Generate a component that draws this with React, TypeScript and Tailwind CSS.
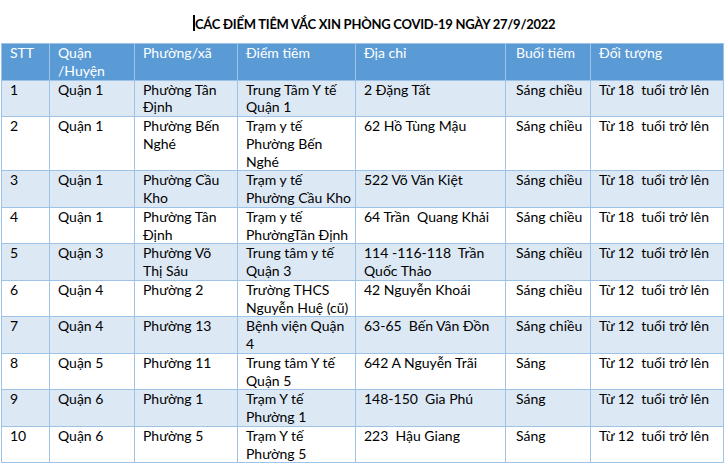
const COLS = [
  { w: 'w-[48px]', pad: 'pl-2' },
  { w: 'w-[85px]', pad: 'pl-2' },
  { w: 'w-[103px]', pad: 'pl-2' },
  { w: 'w-[118px]', pad: 'pl-2' },
  { w: 'w-[150px]', pad: 'pl-2' },
  { w: 'w-[85px]', pad: 'pl-2.5' },
  { w: 'w-[133px]', pad: 'pl-2' },
];

const HEADER: string[][] = [
  ['STT'],
  ['Quận', '/Huyện'],
  ['Phường/xã'],
  ['Điểm tiêm'],
  ['Địa chỉ'],
  ['Buổi tiêm'],
  ['Đối tượng'],
];

const ROWS: string[][][] = [
  [['1'], ['Quận 1'], ['Phường Tân', 'Định'], ['Trung Tâm Y tế', 'Quận 1'], ['2 Đặng Tất'], ['Sáng chiều'], ['Từ 18  tuổi trở lên']],
  [['2'], ['Quận 1'], ['Phường Bến', 'Nghé'], ['Trạm y tế', 'Phường Bến', 'Nghé'], ['62 Hồ Tùng Mậu'], ['Sáng chiều'], ['Từ 18  tuổi trở lên']],
  [['3'], ['Quận 1'], ['Phường Cầu', 'Kho'], ['Trạm y tế', 'Phường Cầu Kho'], ['522 Võ Văn Kiệt'], ['Sáng chiều'], ['Từ 18  tuổi trở lên']],
  [['4'], ['Quận 1'], ['Phường Tân', 'Định'], ['Trạm y tế', 'PhườngTân Định'], ['64 Trần  Quang Khải'], ['Sáng chiều'], ['Từ 18  tuổi trở lên']],
  [['5'], ['Quận 3'], ['Phường Võ', 'Thị Sáu'], ['Trung tâm y tế', 'Quận 3'], ['114 -116-118  Trần', 'Quốc Thảo'], ['Sáng chiều'], ['Từ 12  tuổi trở lên']],
  [['6'], ['Quận 4'], ['Phường 2'], ['Trường THCS', 'Nguyễn Huệ (cũ)'], ['42 Nguyễn Khoái'], ['Sáng chiều'], ['Từ 12  tuổi trở lên']],
  [['7'], ['Quận 4'], ['Phường 13'], ['Bệnh viện Quận', '4'], ['63-65  Bến Vân Đồn'], ['Sáng chiều'], ['Từ 12  tuổi trở lên']],
  [['8'], ['Quận 5'], ['Phường 11'], ['Trung tâm Y tế', 'Quận 5'], ['642 A Nguyễn Trãi'], ['Sáng'], ['Từ 12  tuổi trở lên']],
  [['9'], ['Quận 6'], ['Phường 1'], ['Trạm Y tế', 'Phường 1'], ['148-150  Gia Phú'], ['Sáng'], ['Từ 12  tuổi trở lên']],
  [['10'], ['Quận 6'], ['Phường 5'], ['Trạm Y tế', 'Phường 5'], ['223  Hậu Giang'], ['Sáng'], ['Từ 12  tuổi trở lên']],
];

function Lines({ lines }: { lines: string[] }) {
  return (
    <>
      {lines.map((l, i) => (
        <div key={i} className="whitespace-pre">
          {l}
        </div>
      ))}
    </>
  );
}

export default function App() {
  return (
    <div className="h-[464px] w-[726px] overflow-hidden bg-white font-['Lato','Liberation_Sans',sans-serif] text-[14px] leading-[17.75px] text-black">
      <div className="flex h-[43px] items-start pt-[15px] pl-[193px]">
        <span className="h-[16px] w-[2px] bg-black" />
        <span className="text-[13px] leading-[18px] font-bold tracking-[-0.25px]">
          CÁC ĐIỂM TIÊM VẮC XIN PHÒNG COVID-19 NGÀY 27/9/2022
        </span>
      </div>
      <table className="ml-px table-fixed border-collapse">
        <thead>
          <tr className="bg-[#5b9bd5] text-white">
            {HEADER.map((h, i) => (
              <th
                key={i}
                className={`${COLS[i].w} ${COLS[i].pad} border border-[#9dc3e6] pr-1 text-left align-top font-normal`}
              >
                <Lines lines={h.length === 1 ? [...h, ' '] : h} />
              </th>
            ))}
          </tr>
        </thead>
        <tbody>
          {ROWS.map((row, r) => (
            <tr key={r} className={r % 2 === 0 ? 'bg-[#dde8f5]' : 'bg-white'}>
              {row.map((cell, i) => (
                <td
                  key={i}
                  className={`${COLS[i].w} ${COLS[i].pad} border border-[#9dc3e6] pr-1 align-top`}
                >
                  <Lines lines={cell.length === 1 ? [...cell, ' '] : cell} />
                </td>
              ))}
            </tr>
          ))}
        </tbody>
      </table>
    </div>
  );
}
